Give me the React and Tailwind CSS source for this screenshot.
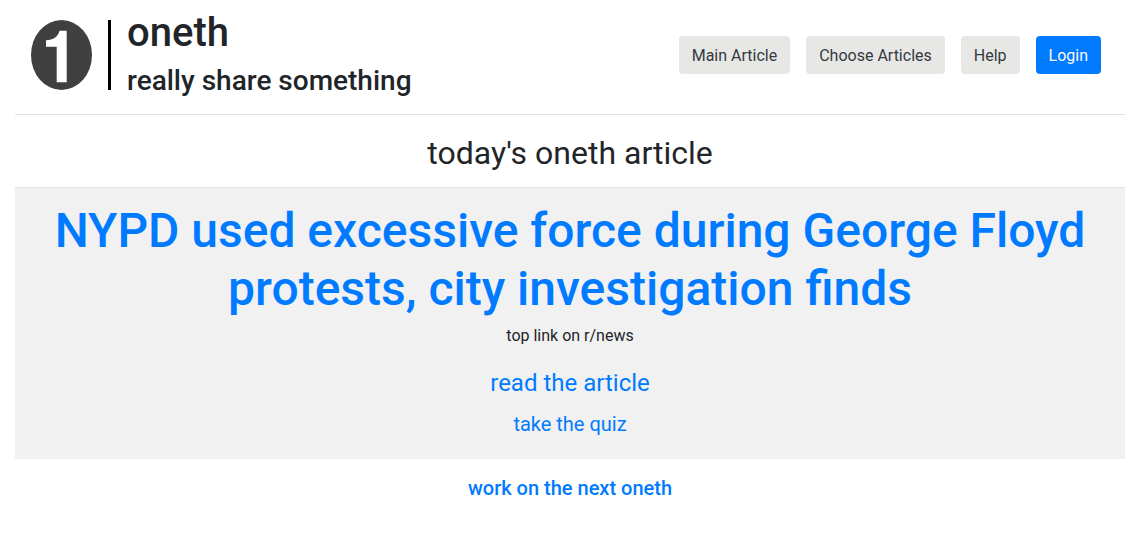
export default function App() {
  return (
    <div className="min-h-screen bg-white pr-5 pl-[15px] font-['Roboto',sans-serif] text-base leading-6 text-[#212529]">
      <header className="flex flex-wrap items-center justify-between border-b border-[#dee2e6] pt-2 pr-6 pb-4 pl-4">
        <div className="flex items-center">
          <svg className="mt-1 h-[70px] w-[61px]" viewBox="0 0 61 70" aria-hidden="true">
            <ellipse cx="30.5" cy="35" rx="30.5" ry="35" fill="#404040" />
            <path d="M28.5 10.7H35.7V62.2H25.7V26.7H15V20.3C22.5 20 26.8 17 28.5 10.7Z" fill="#fff" />
          </svg>
          <div className="mt-1 ml-4 h-[70px] w-[3px] bg-black" />
          <div className="ml-4">
            <h1 className="mb-1.5 text-[40px] leading-[50px] font-medium">oneth</h1>
            <h2 className="text-[28px] leading-[34px] font-medium">really share something</h2>
          </div>
        </div>
        <nav className="flex gap-4 pt-1 text-[#343a40]">
          <a href="#main" className="rounded bg-[#e7e7e6] px-[13px] pt-2 pb-1.5">Main Article</a>
          <a href="#choose" className="rounded bg-[#e7e7e6] px-[13px] pt-2 pb-1.5">Choose Articles</a>
          <a href="#help" className="rounded bg-[#e7e7e6] px-[13px] pt-2 pb-1.5">Help</a>
          <a href="#login" className="rounded bg-[#007bff] px-[13px] pt-2 pb-1.5 text-[#f8f9fa]">Login</a>
        </nav>
      </header>
      <main className="text-center">
        <h2 className="border-b border-[#dee2e6] pt-5 pb-4 text-[32px] leading-9">today's oneth article</h2>
        <section className="bg-[#f1f1f1] px-4 pt-3.5 pb-5">
          <h3 className="mb-1.5 text-5xl leading-[58px] font-medium text-[#007bff]">
            <a href="#article">NYPD used excessive force during George Floyd protests, city investigation finds</a>
          </h3>
          <p>top link on r/news</p>
          <p className="mt-[17px] text-2xl leading-9"><a href="#read" className="text-[#007bff]">read the article</a></p>
          <p className="mt-2 text-xl leading-[30px]"><a href="#quiz" className="text-[#007bff]">take the quiz</a></p>
        </section>
        <p className="pt-[17px] text-xl leading-6 font-medium"><a href="#next" className="text-[#007bff]">work on the next oneth</a></p>
      </main>
    </div>
  );
}
